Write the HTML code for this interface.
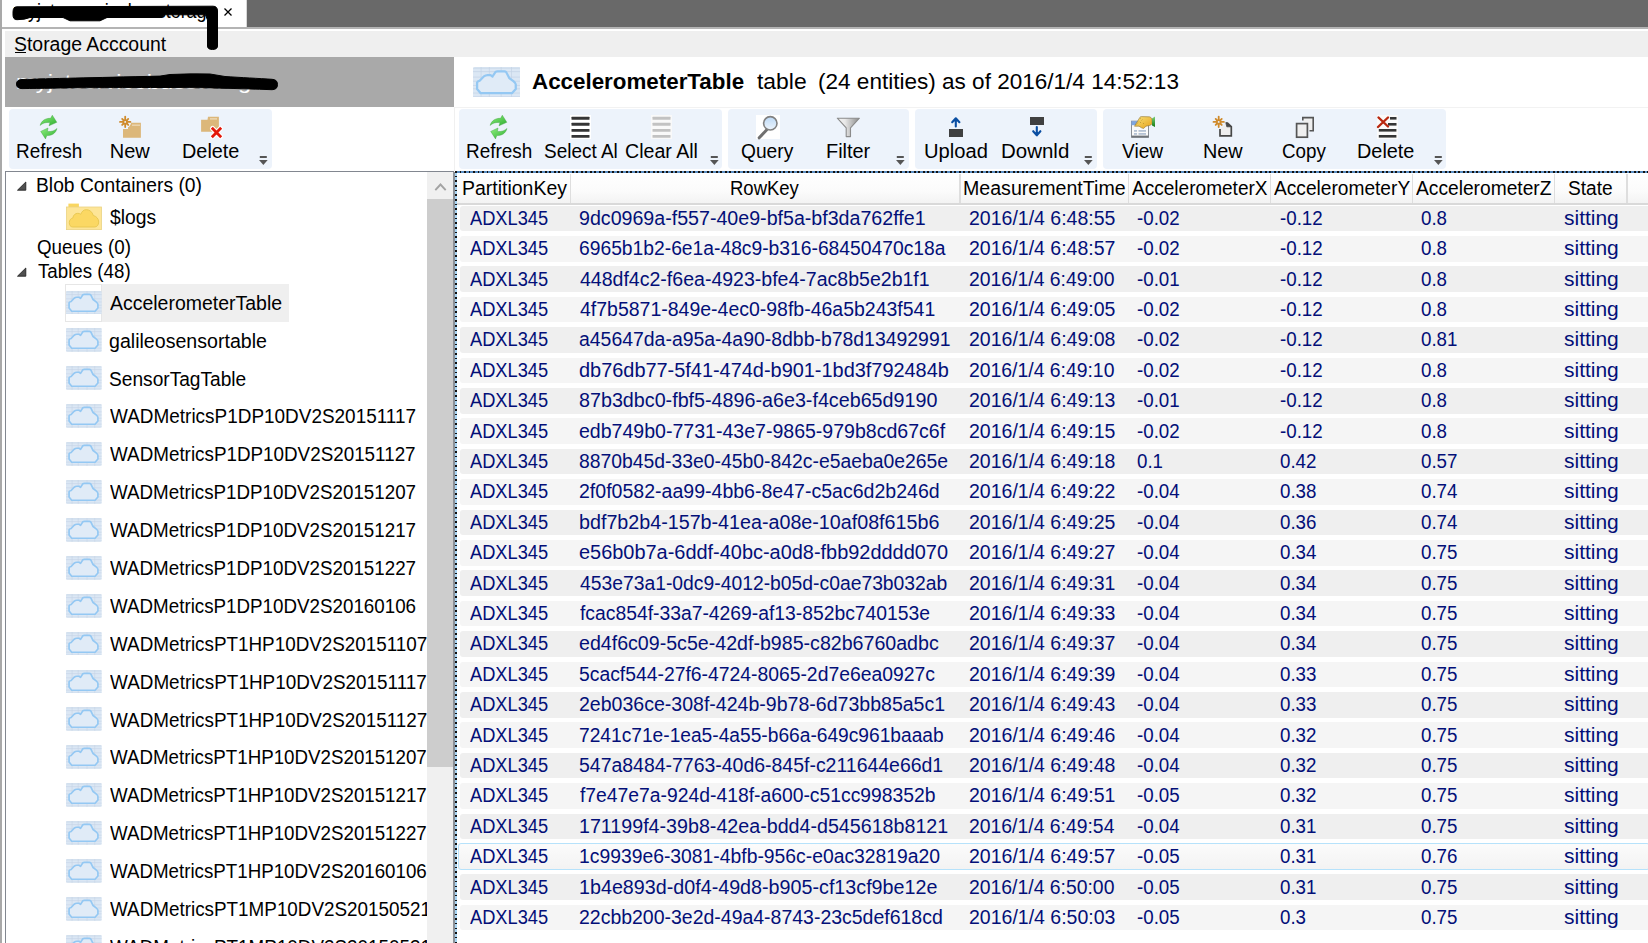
<!DOCTYPE html>
<html><head><meta charset="utf-8"><title>Storage Explorer</title>
<style>
html,body{margin:0;padding:0;width:1648px;height:943px;overflow:hidden;background:#fff;position:relative}
.t{position:absolute;white-space:pre;transform-origin:0 0;font-family:"Liberation Sans", sans-serif}
</style></head><body>
<div style="position:absolute;left:0px;top:0px;width:2px;height:943px;background:#a9a9a9"></div>
<div style="position:absolute;left:247px;top:0px;width:1401px;height:26.7px;background:#696969"></div>
<div style="position:absolute;left:245.5px;top:0px;width:1.5px;height:26.7px;background:#d8d8d8"></div>
<div style="position:absolute;left:2px;top:26.7px;width:1646px;height:2.0px;background:#b4b4b4"></div>
<div style="position:absolute;left:2px;top:28.7px;width:1646px;height:2.3000000000000007px;background:#ffffff"></div>
<div style="position:absolute;left:5px;top:31px;width:1643px;height:26px;background:#efefef"></div>
<div class="t" style="left:14.43px;top:33.97px;font-size:20px;line-height:20px;font-weight:normal;color:#000;transform:scaleX(0.9705)">Storage Acccount</div>
<div style="position:absolute;left:15px;top:52.3px;width:11px;height:1.2000000000000028px;background:#000"></div>
<div class="t" style="left:13.10px;top:1.37px;font-size:20px;line-height:20px;font-weight:normal;color:#000;transform:scaleX(0.8978)">myjstorservicebusstorage</div>
<svg style="position:absolute;left:0;top:0" width="260" height="60">
<path d="M13,12 Q13,6.8 17,6.8 L213,6.2 Q217.5,6.2 217.5,11 L217.5,46 Q217.5,49.5 212.5,49.5 Q207.5,49.5 207.5,46 L207.5,20 L205.4,14.8 L165,14.8 L161,17.5 L107,17.5 L100,20.8 L70,20.8 L63,17.5 L30,17.5 Q25,19.7 17,19.7 Q13,19.7 13,15 Z" fill="#000" stroke="#000" stroke-width="1" stroke-linejoin="round"/>
<path d="M224.5,8.5 L231.5,15.5 M231.5,8.5 L224.5,15.5" stroke="#000" stroke-width="1.3"/>
</svg>
<div style="position:absolute;left:5px;top:57px;width:448.8px;height:50px;background:#a9a9a9"></div>
<div class="t" style="left:15.81px;top:72.07px;font-size:20px;line-height:20px;font-weight:normal;color:#fff;transform:scaleX(1.1884)">myjstservicebusstorage</div>
<svg style="position:absolute;left:0;top:60" width="300" height="50">
<path d="M22,19.5 C50,18.5 90,17.8 160,16.1 L170,14.5 Q190,13.5 210,14 L225,16.5 C240,17.5 260,18.5 272,19.3 Q277.5,19.5 277.5,24.5 Q277.5,29.7 272,29.7 C240,28.5 200,27.5 160,27.5 C110,27.5 60,28 22,28.6 Q16.5,28.6 16.5,24 Q16.5,19.6 22,19.5 Z" fill="#000" stroke="#000" stroke-width="1" stroke-linejoin="round"/>
</svg>
<div style="position:absolute;left:455px;top:106.5px;width:1193px;height:1.0px;background:#f2f2f2"></div>
<div style="position:absolute;left:454px;top:107px;width:1px;height:64px;background:#f0f0f0"></div>
<svg style="position:absolute;left:472.6px;top:66.7px" width="47.8" height="30.8" viewBox="0 0 36 24" preserveAspectRatio="none">
<rect x="0" y="0" width="36" height="24" rx="1.5" fill="#dbe7f4"/>
<g stroke="#c4d3e6" stroke-width="0.55">
<path d="M6.1,0V24 M12.3,0V24 M21.2,0V24 M29,0V24 M0,0.9H36 M0,3.6H36 M0,7.9H36 M0,11.1H36 M0,14.4H36 M0,17H36 M0,20.3H36 M0,23.2H36"/>
</g>
<path d="M5.8,20.4 L3.1,17.2 L3.1,12 Q3.5,11 5.2,10.6 L8.2,7.3 Q9.5,6.3 11,6.3 L13.2,6.3 L14.7,7.4 L17,3.8 Q17.6,3.4 18.5,3.4 L23.5,3.4 Q24.5,3.4 25,4 L27.3,8.6 L30.4,11 Q32.2,12.5 32.2,13.5 L32.2,17.2 L29.3,20.4 Z" fill="#e0ebf7" stroke="#94c8f3" stroke-width="1.7" stroke-linejoin="round"/>
</svg>
<div class="t" style="left:531.98px;top:70.77px;font-size:22px;line-height:22px;font-weight:bold;color:#000;transform:scaleX(1.0164)">AccelerometerTable</div>
<div class="t" style="left:756.70px;top:70.77px;font-size:22px;line-height:22px;font-weight:normal;color:#000;transform:scaleX(1.0404)">table</div>
<div class="t" style="left:817.98px;top:70.77px;font-size:22px;line-height:22px;font-weight:normal;color:#000;transform:scaleX(1.0246)">(24 entities) as of 2016/1/4 14:52:13</div>
<div style="position:absolute;left:9.2px;top:109.2px;width:262.8px;height:60.10000000000001px;background:#edf3fb;border-radius:4px"></div>
<div style="position:absolute;left:459.2px;top:109.2px;width:262.8px;height:60.10000000000001px;background:#edf3fb;border-radius:4px"></div>
<div style="position:absolute;left:728.3px;top:109.2px;width:180.30000000000007px;height:60.10000000000001px;background:#edf3fb;border-radius:4px"></div>
<div style="position:absolute;left:915.2px;top:109.2px;width:181.5999999999999px;height:60.10000000000001px;background:#edf3fb;border-radius:4px"></div>
<div style="position:absolute;left:1103.3px;top:109.2px;width:342.29999999999995px;height:60.10000000000001px;background:#edf3fb;border-radius:4px"></div>
<svg style="position:absolute;left:259.3px;top:155px" width="10" height="11"><rect x="0.8" y="1" width="7" height="2" fill="#555"/><path d="M0,5 L8.7,5 L4.35,10 Z" fill="#555"/></svg>
<svg style="position:absolute;left:709.5px;top:155px" width="10" height="11"><rect x="0.8" y="1" width="7" height="2" fill="#555"/><path d="M0,5 L8.7,5 L4.35,10 Z" fill="#555"/></svg>
<svg style="position:absolute;left:896.3px;top:155px" width="10" height="11"><rect x="0.8" y="1" width="7" height="2" fill="#555"/><path d="M0,5 L8.7,5 L4.35,10 Z" fill="#555"/></svg>
<svg style="position:absolute;left:1084.4px;top:155px" width="10" height="11"><rect x="0.8" y="1" width="7" height="2" fill="#555"/><path d="M0,5 L8.7,5 L4.35,10 Z" fill="#555"/></svg>
<svg style="position:absolute;left:1433.6px;top:155px" width="10" height="11"><rect x="0.8" y="1" width="7" height="2" fill="#555"/><path d="M0,5 L8.7,5 L4.35,10 Z" fill="#555"/></svg>
<svg style="position:absolute;left:35px;top:112px" width="30" height="30" viewBox="0 0 30 30">
<defs><linearGradient id="gr35" x1="0" y1="0" x2="1" y2="1"><stop offset="0" stop-color="#8ef07e"/><stop offset="1" stop-color="#2fae2f"/></linearGradient></defs>
<path d="M5.1,13.4 C6.5,8.5 10.5,6.2 15.6,6.3 L17.3,3.2 L21.8,10.3 L14,13.8 L15,10.6 C10.5,10 7.5,11.3 5.1,13.4 Z" fill="url(#gr35)" stroke="#3ca03c" stroke-width="0.4"/>
<path d="M22,16.5 C20.6,21.5 16.8,23.6 11.8,23.6 L10.5,26.9 L5.7,19.4 L13,16 L12.4,19.4 C16.8,20 19.6,18.6 22,16.5 Z" fill="url(#gr35)" stroke="#3ca03c" stroke-width="0.4"/>
</svg>
<svg style="position:absolute;left:115px;top:112px" width="30" height="30">
<path d="M8,17 L13,17 L13,10.8 L25.9,10.8 L25.9,25.8 L8,25.8 Z" fill="#dcb77a"/>
<rect x="17" y="12.4" width="8" height="1.6" fill="#ead3ac"/>
<circle cx="10.2" cy="9.9" r="6" fill="#edf3fb"/>
<path d="M12.80,9.90 L15.40,9.90" stroke="#cf8a2b" stroke-width="1.8" stroke-linecap="round"/><path d="M12.04,11.74 L13.24,12.94" stroke="#cf8a2b" stroke-width="1.8" stroke-linecap="round"/><path d="M10.20,12.50 L10.20,15.10" stroke="#cf8a2b" stroke-width="1.8" stroke-linecap="round"/><path d="M8.36,11.74 L7.16,12.94" stroke="#cf8a2b" stroke-width="1.8" stroke-linecap="round"/><path d="M7.60,9.90 L5.00,9.90" stroke="#cf8a2b" stroke-width="1.8" stroke-linecap="round"/><path d="M8.36,8.06 L7.16,6.86" stroke="#cf8a2b" stroke-width="1.8" stroke-linecap="round"/><path d="M10.20,7.30 L10.20,4.70" stroke="#cf8a2b" stroke-width="1.8" stroke-linecap="round"/><path d="M12.04,8.06 L13.24,6.86" stroke="#cf8a2b" stroke-width="1.8" stroke-linecap="round"/><circle cx="10.2" cy="9.9" r="1.8" fill="none" stroke="#cf8a2b" stroke-width="1.7"/>
</svg>
<svg style="position:absolute;left:196px;top:112px" width="30" height="30">
<path d="M5.1,7.8 L11.5,7.8 L12,4.8 L22.9,4.8 L22.9,19.7 L5.1,19.7 Z" fill="#dcb77a"/>
<rect x="14" y="6" width="7" height="1.7" fill="#ead3ac"/>
<path d="M16.5,16.5 L24.5,24.5 M24.5,16.5 L16.5,24.5" stroke="#fff" stroke-width="5" stroke-linecap="round"/>
<path d="M16.8,16.8 L24.2,24.2 M24.2,16.8 L16.8,24.2" stroke="#e3180a" stroke-width="2.8" stroke-linecap="square"/>
</svg>
<div class="t" style="left:16.11px;top:140.87px;font-size:20px;line-height:20px;font-weight:normal;color:#000;transform:scaleX(0.9463)">Refresh</div>
<div class="t" style="left:109.80px;top:140.87px;font-size:20px;line-height:20px;font-weight:normal;color:#000;transform:scaleX(1.0000)">New</div>
<div class="t" style="left:182.41px;top:140.87px;font-size:20px;line-height:20px;font-weight:normal;color:#000;transform:scaleX(0.9927)">Delete</div>
<svg style="position:absolute;left:485px;top:112px" width="30" height="30" viewBox="0 0 30 30">
<defs><linearGradient id="gr485" x1="0" y1="0" x2="1" y2="1"><stop offset="0" stop-color="#8ef07e"/><stop offset="1" stop-color="#2fae2f"/></linearGradient></defs>
<path d="M5.1,13.4 C6.5,8.5 10.5,6.2 15.6,6.3 L17.3,3.2 L21.8,10.3 L14,13.8 L15,10.6 C10.5,10 7.5,11.3 5.1,13.4 Z" fill="url(#gr485)" stroke="#3ca03c" stroke-width="0.4"/>
<path d="M22,16.5 C20.6,21.5 16.8,23.6 11.8,23.6 L10.5,26.9 L5.7,19.4 L13,16 L12.4,19.4 C16.8,20 19.6,18.6 22,16.5 Z" fill="url(#gr485)" stroke="#3ca03c" stroke-width="0.4"/>
</svg>
<svg style="position:absolute;left:565px;top:112px" width="30" height="30"><rect x="5" y="3" width="21" height="24" fill="#ffffff"/><rect x="6.5" y="4.8" width="18" height="2.9" rx="0.5" fill="#353535"/><rect x="6.5" y="10.8" width="18" height="2.9" rx="0.5" fill="#353535"/><rect x="6.5" y="16.9" width="18" height="2.9" rx="0.5" fill="#353535"/><rect x="6.5" y="22.9" width="18" height="2.9" rx="0.5" fill="#353535"/></svg>
<svg style="position:absolute;left:646px;top:112px" width="30" height="30"><rect x="5" y="3" width="21" height="24" fill="#f9f9f9"/><rect x="6.5" y="4.8" width="18" height="2.9" rx="0.5" fill="#c2c2c2"/><rect x="6.5" y="10.8" width="18" height="2.9" rx="0.5" fill="#c2c2c2"/><rect x="6.5" y="16.9" width="18" height="2.9" rx="0.5" fill="#c2c2c2"/><rect x="6.5" y="22.9" width="18" height="2.9" rx="0.5" fill="#c2c2c2"/></svg>
<div class="t" style="left:466.11px;top:140.87px;font-size:20px;line-height:20px;font-weight:normal;color:#000;transform:scaleX(0.9463)">Refresh</div>
<div class="t" style="left:544.05px;top:140.87px;font-size:20px;line-height:20px;font-weight:normal;color:#000;transform:scaleX(0.9474)">Select Al</div>
<div class="t" style="left:625.02px;top:140.87px;font-size:20px;line-height:20px;font-weight:normal;color:#000;transform:scaleX(0.9792)">Clear All</div>
<svg style="position:absolute;left:752px;top:112px" width="30" height="30">
<rect x="4" y="3" width="24" height="24" fill="#fff"/>
<path d="M14.8,17.8 L7.2,25.8" stroke="#707070" stroke-width="3" stroke-linecap="round"/>
<defs><linearGradient id="lens" x1="0" y1="0" x2="0" y2="1"><stop offset="0" stop-color="#bcd9f6"/><stop offset="1" stop-color="#eef5fc"/></linearGradient></defs>
<circle cx="18.3" cy="11.3" r="6.7" fill="url(#lens)" stroke="#808080" stroke-width="1.6"/>
</svg>
<svg style="position:absolute;left:833px;top:112px" width="30" height="30">
<defs><linearGradient id="fun" x1="0" y1="0" x2="1" y2="0"><stop offset="0" stop-color="#f4f4f4"/><stop offset="0.35" stop-color="#e8e8e8"/><stop offset="1" stop-color="#8a8a8a"/></linearGradient></defs>
<path d="M4.3,6.2 L26.4,6.2 L17.5,15.8 L17.5,24.6 L13.2,24.6 L13.2,15.8 Z" fill="url(#fun)" stroke="#8b8b8b" stroke-width="1.1" stroke-linejoin="round"/>
</svg>
<div class="t" style="left:741.04px;top:140.87px;font-size:20px;line-height:20px;font-weight:normal;color:#000;transform:scaleX(0.9593)">Query</div>
<div class="t" style="left:826.01px;top:140.87px;font-size:20px;line-height:20px;font-weight:normal;color:#000;transform:scaleX(0.9952)">Filter</div>
<svg style="position:absolute;left:941px;top:112px" width="30" height="30">
<rect x="8" y="17" width="14" height="8" fill="#404040"/>
<path d="M14.8,14.5 L14.8,6.5 M11.2,10.2 L14.8,6.3 L18.4,10.2" fill="none" stroke="#0a4ea2" stroke-width="2.1" stroke-linecap="round" stroke-linejoin="round"/>
</svg>
<svg style="position:absolute;left:1022px;top:112px" width="30" height="30">
<rect x="8" y="5" width="14" height="8" fill="#404040"/>
<path d="M14.8,15 L14.8,23.3 M11.2,19.2 L14.8,23.4 L18.4,19.2" fill="none" stroke="#0a4ea2" stroke-width="2.1" stroke-linecap="round" stroke-linejoin="round"/>
</svg>
<div class="t" style="left:923.69px;top:140.87px;font-size:20px;line-height:20px;font-weight:normal;color:#000;transform:scaleX(1.0082)">Upload</div>
<div class="t" style="left:1001.45px;top:140.87px;font-size:20px;line-height:20px;font-weight:normal;color:#000;transform:scaleX(1.0234)">Downld</div>
<svg style="position:absolute;left:1128px;top:112px" width="30" height="30">
<rect x="3.5" y="9.2" width="17" height="16" fill="#fafafa" stroke="#8a8f96" stroke-width="1"/>
<rect x="3.5" y="9.2" width="9" height="4" fill="#7fa6e0"/>
<rect x="3.5" y="23.6" width="17.2" height="2" fill="#6f747a"/>
<rect x="6" y="18" width="3" height="1.8" fill="#b5c2d4"/><rect x="10.5" y="18" width="7.5" height="1.8" fill="#b5c2d4"/>
<rect x="6" y="21" width="3" height="1.8" fill="#b5c2d4"/><rect x="10.5" y="21" width="7.5" height="1.8" fill="#b5c2d4"/>
<defs><linearGradient id="hand" x1="0" y1="0" x2="1" y2="1"><stop offset="0" stop-color="#f8e27a"/><stop offset="1" stop-color="#e6a21a"/></linearGradient></defs>
<path d="M6.5,14.2 L12,5.2 Q12.5,4.6 13.5,4.6 L21.5,4.8 Q23,5 24,7 L24.2,11.5 Q23.5,13 21.5,13.5 L18,14.2 L15.5,16.5 L13.5,15.8 L11,14.2 Z" fill="url(#hand)" stroke="#8f7436" stroke-width="0.6" stroke-linejoin="round"/>
<path d="M8.5,12.5 L9.5,11.5 M10,10.5 L11,9.5 M12,11 L13,10 M13.5,8.5 L14.5,7.5 M15,12 L16,11 M12,7 L12.8,6.3" stroke="#8a6a1a" stroke-width="0.7" opacity="0.6"/>
<defs><linearGradient id="grn" x1="0" y1="0" x2="0" y2="1"><stop offset="0" stop-color="#7fd07a"/><stop offset="1" stop-color="#137a13"/></linearGradient></defs>
<path d="M24,6.5 L27,4.5 L27,15 L24,13.5 Z" fill="url(#grn)"/>
</svg>
<svg style="position:absolute;left:1209px;top:112px" width="30" height="30">
<path d="M11,17 L11,23.8 L22.3,23.8 L22.3,14.5 L18.5,11 L17,11" fill="#eeeeee" stroke="#474747" stroke-width="1.7" stroke-linejoin="miter"/>
<path d="M16.8,10.6 L22.6,14.8 L17.8,14.8 Z" fill="#474747" stroke="#474747" stroke-width="0.8" stroke-linejoin="round"/>
<path d="M12.30,9.90 L14.90,9.90" stroke="#cf8a2b" stroke-width="1.8" stroke-linecap="round"/><path d="M11.54,11.74 L12.74,12.94" stroke="#cf8a2b" stroke-width="1.8" stroke-linecap="round"/><path d="M9.70,12.50 L9.70,15.10" stroke="#cf8a2b" stroke-width="1.8" stroke-linecap="round"/><path d="M7.86,11.74 L6.66,12.94" stroke="#cf8a2b" stroke-width="1.8" stroke-linecap="round"/><path d="M7.10,9.90 L4.50,9.90" stroke="#cf8a2b" stroke-width="1.8" stroke-linecap="round"/><path d="M7.86,8.06 L6.66,6.86" stroke="#cf8a2b" stroke-width="1.8" stroke-linecap="round"/><path d="M9.70,7.30 L9.70,4.70" stroke="#cf8a2b" stroke-width="1.8" stroke-linecap="round"/><path d="M11.54,8.06 L12.74,6.86" stroke="#cf8a2b" stroke-width="1.8" stroke-linecap="round"/><circle cx="9.7" cy="9.9" r="1.8" fill="none" stroke="#cf8a2b" stroke-width="1.7"/>
</svg>
<svg style="position:absolute;left:1290px;top:112px" width="30" height="30">
<path d="M12.8,8.5 L12.8,5.6 L23.2,5.6 L23.2,18.8 L19.5,18.8" fill="#efefef" stroke="#555" stroke-width="1.6"/>
<rect x="6.6" y="11.6" width="10.8" height="13.6" fill="#efefef" stroke="#555" stroke-width="1.7"/>
</svg>
<svg style="position:absolute;left:1372px;top:112px" width="30" height="30">
<rect x="5" y="3" width="21" height="24" fill="#fafafa"/>
<rect x="18" y="5" width="6.5" height="2.6" fill="#353535"/>
<rect x="16" y="11" width="8.5" height="2.6" fill="#353535"/>
<rect x="6.8" y="17" width="17.6" height="2.6" fill="#353535"/>
<rect x="6.8" y="23" width="17.6" height="2.6" fill="#353535"/>
<path d="M6.5,5.5 L16,14.5 M16,5.5 L6,15" stroke="#b9280f" stroke-width="2.4" stroke-linecap="round"/>
</svg>
<div class="t" style="left:1122.30px;top:140.87px;font-size:20px;line-height:20px;font-weight:normal;color:#000;transform:scaleX(0.9558)">View</div>
<div class="t" style="left:1203.32px;top:140.87px;font-size:20px;line-height:20px;font-weight:normal;color:#000;transform:scaleX(0.9921)">New</div>
<div class="t" style="left:1282.36px;top:140.87px;font-size:20px;line-height:20px;font-weight:normal;color:#000;transform:scaleX(0.9391)">Copy</div>
<div class="t" style="left:1356.71px;top:140.87px;font-size:20px;line-height:20px;font-weight:normal;color:#000;transform:scaleX(0.9927)">Delete</div>
<div style="position:absolute;left:5px;top:171px;width:448.5px;height:1px;background:#828790"></div>
<div style="position:absolute;left:5px;top:171px;width:1px;height:772px;background:#828790"></div>
<div style="position:absolute;left:427px;top:172px;width:26px;height:27px;background:#f0f0f0"></div>
<svg style="position:absolute;left:427px;top:172px" width="26" height="27"><path d="M8.3,18.2 L13.5,12.5 L18.7,18.2" fill="none" stroke="#a3a3a3" stroke-width="1.9"/></svg>
<div style="position:absolute;left:427px;top:199px;width:26px;height:568px;background:#cdcdcd"></div>
<div style="position:absolute;left:427px;top:767px;width:26px;height:176px;background:#f0f0f0"></div>
<svg style="position:absolute;left:16px;top:181px" width="12" height="11"><path d="M1.5,9.2 L9.8,1 L9.8,9.2 Z" fill="#505050" stroke="#262626" stroke-width="0.9" stroke-linejoin="round"/></svg>
<svg style="position:absolute;left:16px;top:267px" width="12" height="11"><path d="M1.5,9.2 L9.8,1 L9.8,9.2 Z" fill="#505050" stroke="#262626" stroke-width="0.9" stroke-linejoin="round"/></svg>
<div class="t" style="left:36.27px;top:175.37px;font-size:20px;line-height:20px;font-weight:normal;color:#000;transform:scaleX(0.9633)">Blob Containers (0)</div>
<svg style="position:absolute;left:66px;top:203px" width="36" height="27" viewBox="0 0 36 27">
<rect x="2.4" y="0.6" width="10.5" height="4" fill="#f9d660"/>
<rect x="0.5" y="4" width="35" height="22.6" fill="#fde597" stroke="#ead382" stroke-width="0.8"/>
<path d="M6.8,24 C4.3,24 3.3,22 3.3,19.5 C3.3,17 4.8,15.5 6.8,15 C7.3,12 9.3,10.3 11.8,10.3 C13.1,10.3 14.1,10.7 14.8,11.3 C15.8,8.3 17.8,6.7 20.3,6.7 C23.8,6.7 26.3,9 27.3,12.5 C30.6,13.3 32.7,16 32.7,19 C32.7,22 31,24 28.5,24 Z" fill="#fbd863" stroke="#e7c650" stroke-width="0.9"/>
</svg>
<div class="t" style="left:110.10px;top:206.67px;font-size:20px;line-height:20px;font-weight:normal;color:#000;transform:scaleX(0.9681)">$logs</div>
<div class="t" style="left:37.26px;top:236.77px;font-size:20px;line-height:20px;font-weight:normal;color:#000;transform:scaleX(0.9388)">Queues (0)</div>
<div class="t" style="left:38.20px;top:260.97px;font-size:20px;line-height:20px;font-weight:normal;color:#000;transform:scaleX(0.9367)">Tables (48)</div>
<div style="position:absolute;left:65.1px;top:284px;width:37.2px;height:37.60000000000002px;background:#fff;box-sizing:border-box;border:1px solid #e6e6e6"></div>
<div style="position:absolute;left:102.3px;top:284px;width:186.7px;height:37.60000000000002px;background:#efefef"></div>
<div style="position:absolute;left:0;top:0;width:427px;height:943px;overflow:hidden">
<svg style="position:absolute;left:66.2px;top:290.6px" width="35.7" height="23.8" viewBox="0 0 36 24" preserveAspectRatio="none">
<rect x="0" y="0" width="36" height="24" rx="1.5" fill="#dbe7f4"/>
<g stroke="#c4d3e6" stroke-width="0.55">
<path d="M6.1,0V24 M12.3,0V24 M21.2,0V24 M29,0V24 M0,0.9H36 M0,3.6H36 M0,7.9H36 M0,11.1H36 M0,14.4H36 M0,17H36 M0,20.3H36 M0,23.2H36"/>
</g>
<path d="M5.8,20.4 L3.1,17.2 L3.1,12 Q3.5,11 5.2,10.6 L8.2,7.3 Q9.5,6.3 11,6.3 L13.2,6.3 L14.7,7.4 L17,3.8 Q17.6,3.4 18.5,3.4 L23.5,3.4 Q24.5,3.4 25,4 L27.3,8.6 L30.4,11 Q32.2,12.5 32.2,13.5 L32.2,17.2 L29.3,20.4 Z" fill="#e0ebf7" stroke="#94c8f3" stroke-width="1.7" stroke-linejoin="round"/>
</svg>
<div class="t" style="left:110.10px;top:292.77px;font-size:20px;line-height:20px;font-weight:normal;color:#000;transform:scaleX(0.9733)">AccelerometerTable</div>
<svg style="position:absolute;left:66.2px;top:328.49px" width="35.7" height="23.8" viewBox="0 0 36 24" preserveAspectRatio="none">
<rect x="0" y="0" width="36" height="24" rx="1.5" fill="#dbe7f4"/>
<g stroke="#c4d3e6" stroke-width="0.55">
<path d="M6.1,0V24 M12.3,0V24 M21.2,0V24 M29,0V24 M0,0.9H36 M0,3.6H36 M0,7.9H36 M0,11.1H36 M0,14.4H36 M0,17H36 M0,20.3H36 M0,23.2H36"/>
</g>
<path d="M5.8,20.4 L3.1,17.2 L3.1,12 Q3.5,11 5.2,10.6 L8.2,7.3 Q9.5,6.3 11,6.3 L13.2,6.3 L14.7,7.4 L17,3.8 Q17.6,3.4 18.5,3.4 L23.5,3.4 Q24.5,3.4 25,4 L27.3,8.6 L30.4,11 Q32.2,12.5 32.2,13.5 L32.2,17.2 L29.3,20.4 Z" fill="#e0ebf7" stroke="#94c8f3" stroke-width="1.7" stroke-linejoin="round"/>
</svg>
<div class="t" style="left:109.12px;top:330.66px;font-size:20px;line-height:20px;font-weight:normal;color:#000;transform:scaleX(0.9799)">galileosensortable</div>
<svg style="position:absolute;left:66.2px;top:366.38px" width="35.7" height="23.8" viewBox="0 0 36 24" preserveAspectRatio="none">
<rect x="0" y="0" width="36" height="24" rx="1.5" fill="#dbe7f4"/>
<g stroke="#c4d3e6" stroke-width="0.55">
<path d="M6.1,0V24 M12.3,0V24 M21.2,0V24 M29,0V24 M0,0.9H36 M0,3.6H36 M0,7.9H36 M0,11.1H36 M0,14.4H36 M0,17H36 M0,20.3H36 M0,23.2H36"/>
</g>
<path d="M5.8,20.4 L3.1,17.2 L3.1,12 Q3.5,11 5.2,10.6 L8.2,7.3 Q9.5,6.3 11,6.3 L13.2,6.3 L14.7,7.4 L17,3.8 Q17.6,3.4 18.5,3.4 L23.5,3.4 Q24.5,3.4 25,4 L27.3,8.6 L30.4,11 Q32.2,12.5 32.2,13.5 L32.2,17.2 L29.3,20.4 Z" fill="#e0ebf7" stroke="#94c8f3" stroke-width="1.7" stroke-linejoin="round"/>
</svg>
<div class="t" style="left:109.14px;top:368.55px;font-size:20px;line-height:20px;font-weight:normal;color:#000;transform:scaleX(0.9570)">SensorTagTable</div>
<svg style="position:absolute;left:66.2px;top:404.27000000000004px" width="35.7" height="23.8" viewBox="0 0 36 24" preserveAspectRatio="none">
<rect x="0" y="0" width="36" height="24" rx="1.5" fill="#dbe7f4"/>
<g stroke="#c4d3e6" stroke-width="0.55">
<path d="M6.1,0V24 M12.3,0V24 M21.2,0V24 M29,0V24 M0,0.9H36 M0,3.6H36 M0,7.9H36 M0,11.1H36 M0,14.4H36 M0,17H36 M0,20.3H36 M0,23.2H36"/>
</g>
<path d="M5.8,20.4 L3.1,17.2 L3.1,12 Q3.5,11 5.2,10.6 L8.2,7.3 Q9.5,6.3 11,6.3 L13.2,6.3 L14.7,7.4 L17,3.8 Q17.6,3.4 18.5,3.4 L23.5,3.4 Q24.5,3.4 25,4 L27.3,8.6 L30.4,11 Q32.2,12.5 32.2,13.5 L32.2,17.2 L29.3,20.4 Z" fill="#e0ebf7" stroke="#94c8f3" stroke-width="1.7" stroke-linejoin="round"/>
</svg>
<div class="t" style="left:110.10px;top:406.44px;font-size:20px;line-height:20px;font-weight:normal;color:#000;transform:scaleX(0.9472)">WADMetricsP1DP10DV2S20151117</div>
<svg style="position:absolute;left:66.2px;top:442.16px" width="35.7" height="23.8" viewBox="0 0 36 24" preserveAspectRatio="none">
<rect x="0" y="0" width="36" height="24" rx="1.5" fill="#dbe7f4"/>
<g stroke="#c4d3e6" stroke-width="0.55">
<path d="M6.1,0V24 M12.3,0V24 M21.2,0V24 M29,0V24 M0,0.9H36 M0,3.6H36 M0,7.9H36 M0,11.1H36 M0,14.4H36 M0,17H36 M0,20.3H36 M0,23.2H36"/>
</g>
<path d="M5.8,20.4 L3.1,17.2 L3.1,12 Q3.5,11 5.2,10.6 L8.2,7.3 Q9.5,6.3 11,6.3 L13.2,6.3 L14.7,7.4 L17,3.8 Q17.6,3.4 18.5,3.4 L23.5,3.4 Q24.5,3.4 25,4 L27.3,8.6 L30.4,11 Q32.2,12.5 32.2,13.5 L32.2,17.2 L29.3,20.4 Z" fill="#e0ebf7" stroke="#94c8f3" stroke-width="1.7" stroke-linejoin="round"/>
</svg>
<div class="t" style="left:110.10px;top:444.33px;font-size:20px;line-height:20px;font-weight:normal;color:#000;transform:scaleX(0.9414)">WADMetricsP1DP10DV2S20151127</div>
<svg style="position:absolute;left:66.2px;top:480.05px" width="35.7" height="23.8" viewBox="0 0 36 24" preserveAspectRatio="none">
<rect x="0" y="0" width="36" height="24" rx="1.5" fill="#dbe7f4"/>
<g stroke="#c4d3e6" stroke-width="0.55">
<path d="M6.1,0V24 M12.3,0V24 M21.2,0V24 M29,0V24 M0,0.9H36 M0,3.6H36 M0,7.9H36 M0,11.1H36 M0,14.4H36 M0,17H36 M0,20.3H36 M0,23.2H36"/>
</g>
<path d="M5.8,20.4 L3.1,17.2 L3.1,12 Q3.5,11 5.2,10.6 L8.2,7.3 Q9.5,6.3 11,6.3 L13.2,6.3 L14.7,7.4 L17,3.8 Q17.6,3.4 18.5,3.4 L23.5,3.4 Q24.5,3.4 25,4 L27.3,8.6 L30.4,11 Q32.2,12.5 32.2,13.5 L32.2,17.2 L29.3,20.4 Z" fill="#e0ebf7" stroke="#94c8f3" stroke-width="1.7" stroke-linejoin="round"/>
</svg>
<div class="t" style="left:110.10px;top:482.22px;font-size:20px;line-height:20px;font-weight:normal;color:#000;transform:scaleX(0.9385)">WADMetricsP1DP10DV2S20151207</div>
<svg style="position:absolute;left:66.2px;top:517.94px" width="35.7" height="23.8" viewBox="0 0 36 24" preserveAspectRatio="none">
<rect x="0" y="0" width="36" height="24" rx="1.5" fill="#dbe7f4"/>
<g stroke="#c4d3e6" stroke-width="0.55">
<path d="M6.1,0V24 M12.3,0V24 M21.2,0V24 M29,0V24 M0,0.9H36 M0,3.6H36 M0,7.9H36 M0,11.1H36 M0,14.4H36 M0,17H36 M0,20.3H36 M0,23.2H36"/>
</g>
<path d="M5.8,20.4 L3.1,17.2 L3.1,12 Q3.5,11 5.2,10.6 L8.2,7.3 Q9.5,6.3 11,6.3 L13.2,6.3 L14.7,7.4 L17,3.8 Q17.6,3.4 18.5,3.4 L23.5,3.4 Q24.5,3.4 25,4 L27.3,8.6 L30.4,11 Q32.2,12.5 32.2,13.5 L32.2,17.2 L29.3,20.4 Z" fill="#e0ebf7" stroke="#94c8f3" stroke-width="1.7" stroke-linejoin="round"/>
</svg>
<div class="t" style="left:110.10px;top:520.11px;font-size:20px;line-height:20px;font-weight:normal;color:#000;transform:scaleX(0.9385)">WADMetricsP1DP10DV2S20151217</div>
<svg style="position:absolute;left:66.2px;top:555.83px" width="35.7" height="23.8" viewBox="0 0 36 24" preserveAspectRatio="none">
<rect x="0" y="0" width="36" height="24" rx="1.5" fill="#dbe7f4"/>
<g stroke="#c4d3e6" stroke-width="0.55">
<path d="M6.1,0V24 M12.3,0V24 M21.2,0V24 M29,0V24 M0,0.9H36 M0,3.6H36 M0,7.9H36 M0,11.1H36 M0,14.4H36 M0,17H36 M0,20.3H36 M0,23.2H36"/>
</g>
<path d="M5.8,20.4 L3.1,17.2 L3.1,12 Q3.5,11 5.2,10.6 L8.2,7.3 Q9.5,6.3 11,6.3 L13.2,6.3 L14.7,7.4 L17,3.8 Q17.6,3.4 18.5,3.4 L23.5,3.4 Q24.5,3.4 25,4 L27.3,8.6 L30.4,11 Q32.2,12.5 32.2,13.5 L32.2,17.2 L29.3,20.4 Z" fill="#e0ebf7" stroke="#94c8f3" stroke-width="1.7" stroke-linejoin="round"/>
</svg>
<div class="t" style="left:110.10px;top:558.00px;font-size:20px;line-height:20px;font-weight:normal;color:#000;transform:scaleX(0.9385)">WADMetricsP1DP10DV2S20151227</div>
<svg style="position:absolute;left:66.2px;top:593.72px" width="35.7" height="23.8" viewBox="0 0 36 24" preserveAspectRatio="none">
<rect x="0" y="0" width="36" height="24" rx="1.5" fill="#dbe7f4"/>
<g stroke="#c4d3e6" stroke-width="0.55">
<path d="M6.1,0V24 M12.3,0V24 M21.2,0V24 M29,0V24 M0,0.9H36 M0,3.6H36 M0,7.9H36 M0,11.1H36 M0,14.4H36 M0,17H36 M0,20.3H36 M0,23.2H36"/>
</g>
<path d="M5.8,20.4 L3.1,17.2 L3.1,12 Q3.5,11 5.2,10.6 L8.2,7.3 Q9.5,6.3 11,6.3 L13.2,6.3 L14.7,7.4 L17,3.8 Q17.6,3.4 18.5,3.4 L23.5,3.4 Q24.5,3.4 25,4 L27.3,8.6 L30.4,11 Q32.2,12.5 32.2,13.5 L32.2,17.2 L29.3,20.4 Z" fill="#e0ebf7" stroke="#94c8f3" stroke-width="1.7" stroke-linejoin="round"/>
</svg>
<div class="t" style="left:110.10px;top:595.89px;font-size:20px;line-height:20px;font-weight:normal;color:#000;transform:scaleX(0.9385)">WADMetricsP1DP10DV2S20160106</div>
<svg style="position:absolute;left:66.2px;top:631.61px" width="35.7" height="23.8" viewBox="0 0 36 24" preserveAspectRatio="none">
<rect x="0" y="0" width="36" height="24" rx="1.5" fill="#dbe7f4"/>
<g stroke="#c4d3e6" stroke-width="0.55">
<path d="M6.1,0V24 M12.3,0V24 M21.2,0V24 M29,0V24 M0,0.9H36 M0,3.6H36 M0,7.9H36 M0,11.1H36 M0,14.4H36 M0,17H36 M0,20.3H36 M0,23.2H36"/>
</g>
<path d="M5.8,20.4 L3.1,17.2 L3.1,12 Q3.5,11 5.2,10.6 L8.2,7.3 Q9.5,6.3 11,6.3 L13.2,6.3 L14.7,7.4 L17,3.8 Q17.6,3.4 18.5,3.4 L23.5,3.4 Q24.5,3.4 25,4 L27.3,8.6 L30.4,11 Q32.2,12.5 32.2,13.5 L32.2,17.2 L29.3,20.4 Z" fill="#e0ebf7" stroke="#94c8f3" stroke-width="1.7" stroke-linejoin="round"/>
</svg>
<div class="t" style="left:110.10px;top:633.78px;font-size:20px;line-height:20px;font-weight:normal;color:#000;transform:scaleX(0.9420)">WADMetricsPT1HP10DV2S20151107</div>
<svg style="position:absolute;left:66.2px;top:669.5px" width="35.7" height="23.8" viewBox="0 0 36 24" preserveAspectRatio="none">
<rect x="0" y="0" width="36" height="24" rx="1.5" fill="#dbe7f4"/>
<g stroke="#c4d3e6" stroke-width="0.55">
<path d="M6.1,0V24 M12.3,0V24 M21.2,0V24 M29,0V24 M0,0.9H36 M0,3.6H36 M0,7.9H36 M0,11.1H36 M0,14.4H36 M0,17H36 M0,20.3H36 M0,23.2H36"/>
</g>
<path d="M5.8,20.4 L3.1,17.2 L3.1,12 Q3.5,11 5.2,10.6 L8.2,7.3 Q9.5,6.3 11,6.3 L13.2,6.3 L14.7,7.4 L17,3.8 Q17.6,3.4 18.5,3.4 L23.5,3.4 Q24.5,3.4 25,4 L27.3,8.6 L30.4,11 Q32.2,12.5 32.2,13.5 L32.2,17.2 L29.3,20.4 Z" fill="#e0ebf7" stroke="#94c8f3" stroke-width="1.7" stroke-linejoin="round"/>
</svg>
<div class="t" style="left:110.10px;top:671.67px;font-size:20px;line-height:20px;font-weight:normal;color:#000;transform:scaleX(0.9448)">WADMetricsPT1HP10DV2S20151117</div>
<svg style="position:absolute;left:66.2px;top:707.3900000000001px" width="35.7" height="23.8" viewBox="0 0 36 24" preserveAspectRatio="none">
<rect x="0" y="0" width="36" height="24" rx="1.5" fill="#dbe7f4"/>
<g stroke="#c4d3e6" stroke-width="0.55">
<path d="M6.1,0V24 M12.3,0V24 M21.2,0V24 M29,0V24 M0,0.9H36 M0,3.6H36 M0,7.9H36 M0,11.1H36 M0,14.4H36 M0,17H36 M0,20.3H36 M0,23.2H36"/>
</g>
<path d="M5.8,20.4 L3.1,17.2 L3.1,12 Q3.5,11 5.2,10.6 L8.2,7.3 Q9.5,6.3 11,6.3 L13.2,6.3 L14.7,7.4 L17,3.8 Q17.6,3.4 18.5,3.4 L23.5,3.4 Q24.5,3.4 25,4 L27.3,8.6 L30.4,11 Q32.2,12.5 32.2,13.5 L32.2,17.2 L29.3,20.4 Z" fill="#e0ebf7" stroke="#94c8f3" stroke-width="1.7" stroke-linejoin="round"/>
</svg>
<div class="t" style="left:110.10px;top:709.56px;font-size:20px;line-height:20px;font-weight:normal;color:#000;transform:scaleX(0.9420)">WADMetricsPT1HP10DV2S20151127</div>
<svg style="position:absolute;left:66.2px;top:745.28px" width="35.7" height="23.8" viewBox="0 0 36 24" preserveAspectRatio="none">
<rect x="0" y="0" width="36" height="24" rx="1.5" fill="#dbe7f4"/>
<g stroke="#c4d3e6" stroke-width="0.55">
<path d="M6.1,0V24 M12.3,0V24 M21.2,0V24 M29,0V24 M0,0.9H36 M0,3.6H36 M0,7.9H36 M0,11.1H36 M0,14.4H36 M0,17H36 M0,20.3H36 M0,23.2H36"/>
</g>
<path d="M5.8,20.4 L3.1,17.2 L3.1,12 Q3.5,11 5.2,10.6 L8.2,7.3 Q9.5,6.3 11,6.3 L13.2,6.3 L14.7,7.4 L17,3.8 Q17.6,3.4 18.5,3.4 L23.5,3.4 Q24.5,3.4 25,4 L27.3,8.6 L30.4,11 Q32.2,12.5 32.2,13.5 L32.2,17.2 L29.3,20.4 Z" fill="#e0ebf7" stroke="#94c8f3" stroke-width="1.7" stroke-linejoin="round"/>
</svg>
<div class="t" style="left:110.10px;top:747.45px;font-size:20px;line-height:20px;font-weight:normal;color:#000;transform:scaleX(0.9364)">WADMetricsPT1HP10DV2S20151207</div>
<svg style="position:absolute;left:66.2px;top:783.1700000000001px" width="35.7" height="23.8" viewBox="0 0 36 24" preserveAspectRatio="none">
<rect x="0" y="0" width="36" height="24" rx="1.5" fill="#dbe7f4"/>
<g stroke="#c4d3e6" stroke-width="0.55">
<path d="M6.1,0V24 M12.3,0V24 M21.2,0V24 M29,0V24 M0,0.9H36 M0,3.6H36 M0,7.9H36 M0,11.1H36 M0,14.4H36 M0,17H36 M0,20.3H36 M0,23.2H36"/>
</g>
<path d="M5.8,20.4 L3.1,17.2 L3.1,12 Q3.5,11 5.2,10.6 L8.2,7.3 Q9.5,6.3 11,6.3 L13.2,6.3 L14.7,7.4 L17,3.8 Q17.6,3.4 18.5,3.4 L23.5,3.4 Q24.5,3.4 25,4 L27.3,8.6 L30.4,11 Q32.2,12.5 32.2,13.5 L32.2,17.2 L29.3,20.4 Z" fill="#e0ebf7" stroke="#94c8f3" stroke-width="1.7" stroke-linejoin="round"/>
</svg>
<div class="t" style="left:110.10px;top:785.34px;font-size:20px;line-height:20px;font-weight:normal;color:#000;transform:scaleX(0.9364)">WADMetricsPT1HP10DV2S20151217</div>
<svg style="position:absolute;left:66.2px;top:821.0600000000001px" width="35.7" height="23.8" viewBox="0 0 36 24" preserveAspectRatio="none">
<rect x="0" y="0" width="36" height="24" rx="1.5" fill="#dbe7f4"/>
<g stroke="#c4d3e6" stroke-width="0.55">
<path d="M6.1,0V24 M12.3,0V24 M21.2,0V24 M29,0V24 M0,0.9H36 M0,3.6H36 M0,7.9H36 M0,11.1H36 M0,14.4H36 M0,17H36 M0,20.3H36 M0,23.2H36"/>
</g>
<path d="M5.8,20.4 L3.1,17.2 L3.1,12 Q3.5,11 5.2,10.6 L8.2,7.3 Q9.5,6.3 11,6.3 L13.2,6.3 L14.7,7.4 L17,3.8 Q17.6,3.4 18.5,3.4 L23.5,3.4 Q24.5,3.4 25,4 L27.3,8.6 L30.4,11 Q32.2,12.5 32.2,13.5 L32.2,17.2 L29.3,20.4 Z" fill="#e0ebf7" stroke="#94c8f3" stroke-width="1.7" stroke-linejoin="round"/>
</svg>
<div class="t" style="left:110.10px;top:823.23px;font-size:20px;line-height:20px;font-weight:normal;color:#000;transform:scaleX(0.9364)">WADMetricsPT1HP10DV2S20151227</div>
<svg style="position:absolute;left:66.2px;top:858.95px" width="35.7" height="23.8" viewBox="0 0 36 24" preserveAspectRatio="none">
<rect x="0" y="0" width="36" height="24" rx="1.5" fill="#dbe7f4"/>
<g stroke="#c4d3e6" stroke-width="0.55">
<path d="M6.1,0V24 M12.3,0V24 M21.2,0V24 M29,0V24 M0,0.9H36 M0,3.6H36 M0,7.9H36 M0,11.1H36 M0,14.4H36 M0,17H36 M0,20.3H36 M0,23.2H36"/>
</g>
<path d="M5.8,20.4 L3.1,17.2 L3.1,12 Q3.5,11 5.2,10.6 L8.2,7.3 Q9.5,6.3 11,6.3 L13.2,6.3 L14.7,7.4 L17,3.8 Q17.6,3.4 18.5,3.4 L23.5,3.4 Q24.5,3.4 25,4 L27.3,8.6 L30.4,11 Q32.2,12.5 32.2,13.5 L32.2,17.2 L29.3,20.4 Z" fill="#e0ebf7" stroke="#94c8f3" stroke-width="1.7" stroke-linejoin="round"/>
</svg>
<div class="t" style="left:110.10px;top:861.12px;font-size:20px;line-height:20px;font-weight:normal;color:#000;transform:scaleX(0.9364)">WADMetricsPT1HP10DV2S20160106</div>
<svg style="position:absolute;left:66.2px;top:896.84px" width="35.7" height="23.8" viewBox="0 0 36 24" preserveAspectRatio="none">
<rect x="0" y="0" width="36" height="24" rx="1.5" fill="#dbe7f4"/>
<g stroke="#c4d3e6" stroke-width="0.55">
<path d="M6.1,0V24 M12.3,0V24 M21.2,0V24 M29,0V24 M0,0.9H36 M0,3.6H36 M0,7.9H36 M0,11.1H36 M0,14.4H36 M0,17H36 M0,20.3H36 M0,23.2H36"/>
</g>
<path d="M5.8,20.4 L3.1,17.2 L3.1,12 Q3.5,11 5.2,10.6 L8.2,7.3 Q9.5,6.3 11,6.3 L13.2,6.3 L14.7,7.4 L17,3.8 Q17.6,3.4 18.5,3.4 L23.5,3.4 Q24.5,3.4 25,4 L27.3,8.6 L30.4,11 Q32.2,12.5 32.2,13.5 L32.2,17.2 L29.3,20.4 Z" fill="#e0ebf7" stroke="#94c8f3" stroke-width="1.7" stroke-linejoin="round"/>
</svg>
<div class="t" style="left:110.10px;top:899.01px;font-size:20px;line-height:20px;font-weight:normal;color:#000;transform:scaleX(0.9426)">WADMetricsPT1MP10DV2S20150521</div>
<svg style="position:absolute;left:66.2px;top:934.73px" width="35.7" height="23.8" viewBox="0 0 36 24" preserveAspectRatio="none">
<rect x="0" y="0" width="36" height="24" rx="1.5" fill="#dbe7f4"/>
<g stroke="#c4d3e6" stroke-width="0.55">
<path d="M6.1,0V24 M12.3,0V24 M21.2,0V24 M29,0V24 M0,0.9H36 M0,3.6H36 M0,7.9H36 M0,11.1H36 M0,14.4H36 M0,17H36 M0,20.3H36 M0,23.2H36"/>
</g>
<path d="M5.8,20.4 L3.1,17.2 L3.1,12 Q3.5,11 5.2,10.6 L8.2,7.3 Q9.5,6.3 11,6.3 L13.2,6.3 L14.7,7.4 L17,3.8 Q17.6,3.4 18.5,3.4 L23.5,3.4 Q24.5,3.4 25,4 L27.3,8.6 L30.4,11 Q32.2,12.5 32.2,13.5 L32.2,17.2 L29.3,20.4 Z" fill="#e0ebf7" stroke="#94c8f3" stroke-width="1.7" stroke-linejoin="round"/>
</svg>
<div class="t" style="left:110.10px;top:936.90px;font-size:20px;line-height:20px;font-weight:normal;color:#000;transform:scaleX(0.9426)">WADMetricsPT1MP10DV2S20150531</div>
</div>
<div style="position:absolute;left:453px;top:172px;width:1.5px;height:771px;background:#8c9198"></div>
<div style="position:absolute;left:455px;top:171px;width:1193px;height:1.5999999999999943px;background:repeating-linear-gradient(90deg,#111 0,#111 1.6px,#5b8fc4 1.6px,#5b8fc4 4.5px)"></div>
<div style="position:absolute;left:455px;top:171px;width:1.6999999999999886px;height:772px;background:repeating-linear-gradient(180deg,#111 0,#111 1.6px,#a9d6f5 1.6px,#a9d6f5 4.67px)"></div>
<div style="position:absolute;left:457px;top:174.3px;width:1191px;height:28.69999999999999px;background:linear-gradient(#ffffff,#fbfbfb 60%,#f3f3f3)"></div>
<div style="position:absolute;left:457px;top:203px;width:1191px;height:1.5px;background:#d9d9d9"></div>
<div style="position:absolute;left:569.75px;top:174.3px;width:1.5px;height:28.69999999999999px;background:#dedede"></div>
<div style="position:absolute;left:959.25px;top:174.3px;width:1.5px;height:28.69999999999999px;background:#dedede"></div>
<div style="position:absolute;left:1127.55px;top:174.3px;width:1.5px;height:28.69999999999999px;background:#dedede"></div>
<div style="position:absolute;left:1269.55px;top:174.3px;width:1.5px;height:28.69999999999999px;background:#dedede"></div>
<div style="position:absolute;left:1411.85px;top:174.3px;width:1.5px;height:28.69999999999999px;background:#dedede"></div>
<div style="position:absolute;left:1553.85px;top:174.3px;width:1.5px;height:28.69999999999999px;background:#dedede"></div>
<div style="position:absolute;left:1626.25px;top:174.3px;width:1.5px;height:28.69999999999999px;background:#dedede"></div>
<div class="t" style="left:462.35px;top:178.27px;font-size:20px;line-height:20px;font-weight:normal;color:#000;transform:scaleX(0.9736)">PartitionKey</div>
<div class="t" style="left:730.15px;top:178.27px;font-size:20px;line-height:20px;font-weight:normal;color:#000;transform:scaleX(0.9247)">RowKey</div>
<div class="t" style="left:962.64px;top:178.27px;font-size:20px;line-height:20px;font-weight:normal;color:#000;transform:scaleX(0.9798)">MeasurementTime</div>
<div class="t" style="left:1131.70px;top:178.27px;font-size:20px;line-height:20px;font-weight:normal;color:#000;transform:scaleX(0.9528)">AccelerometerX</div>
<div class="t" style="left:1273.80px;top:178.27px;font-size:20px;line-height:20px;font-weight:normal;color:#000;transform:scaleX(0.9570)">AccelerometerY</div>
<div class="t" style="left:1416.00px;top:178.27px;font-size:20px;line-height:20px;font-weight:normal;color:#000;transform:scaleX(0.9596)">AccelerometerZ</div>
<div class="t" style="left:1568.04px;top:178.27px;font-size:20px;line-height:20px;font-weight:normal;color:#000;transform:scaleX(0.9556)">State</div>
<div style="position:absolute;left:459.8px;top:205.6px;width:1190.2px;height:25.599999999999994px;background:#efefef;border-radius:3px"></div>
<div class="t" style="left:469.60px;top:207.87px;font-size:20px;line-height:20px;font-weight:normal;color:#030f78;transform:scaleX(0.9129)">ADXL345</div>
<div class="t" style="left:579.22px;top:207.87px;font-size:20px;line-height:20px;font-weight:normal;color:#030f78;transform:scaleX(0.9810)">9dc0969a-f557-40e9-bf5a-bf3da762ffe1</div>
<div class="t" style="left:968.73px;top:207.87px;font-size:20px;line-height:20px;font-weight:normal;color:#030f78;transform:scaleX(0.9750)">2016/1/4 6:48:55</div>
<div class="t" style="left:1137.06px;top:207.87px;font-size:20px;line-height:20px;font-weight:normal;color:#030f78;transform:scaleX(0.9367)">-0.02</div>
<div class="t" style="left:1279.56px;top:207.87px;font-size:20px;line-height:20px;font-weight:normal;color:#030f78;transform:scaleX(0.9367)">-0.12</div>
<div class="t" style="left:1421.36px;top:207.87px;font-size:20px;line-height:20px;font-weight:normal;color:#030f78;transform:scaleX(0.9367)">0.8</div>
<div class="t" style="left:1563.55px;top:207.87px;font-size:20px;line-height:20px;font-weight:normal;color:#030f78;transform:scaleX(1.0480)">sitting</div>
<div style="position:absolute;left:459.8px;top:236.0px;width:1190.2px;height:25.600000000000023px;background:#f5f5f5;border-radius:3px"></div>
<div class="t" style="left:469.60px;top:238.27px;font-size:20px;line-height:20px;font-weight:normal;color:#030f78;transform:scaleX(0.9129)">ADXL345</div>
<div class="t" style="left:579.24px;top:238.27px;font-size:20px;line-height:20px;font-weight:normal;color:#030f78;transform:scaleX(0.9634)">6965b1b2-6e1a-48c9-b316-68450470c18a</div>
<div class="t" style="left:968.73px;top:238.27px;font-size:20px;line-height:20px;font-weight:normal;color:#030f78;transform:scaleX(0.9750)">2016/1/4 6:48:57</div>
<div class="t" style="left:1137.06px;top:238.27px;font-size:20px;line-height:20px;font-weight:normal;color:#030f78;transform:scaleX(0.9367)">-0.02</div>
<div class="t" style="left:1279.56px;top:238.27px;font-size:20px;line-height:20px;font-weight:normal;color:#030f78;transform:scaleX(0.9367)">-0.12</div>
<div class="t" style="left:1421.36px;top:238.27px;font-size:20px;line-height:20px;font-weight:normal;color:#030f78;transform:scaleX(0.9367)">0.8</div>
<div class="t" style="left:1563.55px;top:238.27px;font-size:20px;line-height:20px;font-weight:normal;color:#030f78;transform:scaleX(1.0480)">sitting</div>
<div style="position:absolute;left:459.8px;top:266.4px;width:1190.2px;height:25.600000000000023px;background:#efefef;border-radius:3px"></div>
<div class="t" style="left:469.60px;top:268.67px;font-size:20px;line-height:20px;font-weight:normal;color:#030f78;transform:scaleX(0.9129)">ADXL345</div>
<div class="t" style="left:580.20px;top:268.67px;font-size:20px;line-height:20px;font-weight:normal;color:#030f78;transform:scaleX(0.9765)">448df4c2-f6ea-4923-bfe4-7ac8b5e2b1f1</div>
<div class="t" style="left:968.73px;top:268.67px;font-size:20px;line-height:20px;font-weight:normal;color:#030f78;transform:scaleX(0.9685)">2016/1/4 6:49:00</div>
<div class="t" style="left:1137.06px;top:268.67px;font-size:20px;line-height:20px;font-weight:normal;color:#030f78;transform:scaleX(0.9367)">-0.01</div>
<div class="t" style="left:1279.56px;top:268.67px;font-size:20px;line-height:20px;font-weight:normal;color:#030f78;transform:scaleX(0.9367)">-0.12</div>
<div class="t" style="left:1421.36px;top:268.67px;font-size:20px;line-height:20px;font-weight:normal;color:#030f78;transform:scaleX(0.9367)">0.8</div>
<div class="t" style="left:1563.55px;top:268.67px;font-size:20px;line-height:20px;font-weight:normal;color:#030f78;transform:scaleX(1.0480)">sitting</div>
<div style="position:absolute;left:459.8px;top:296.79999999999995px;width:1190.2px;height:25.600000000000023px;background:#f5f5f5;border-radius:3px"></div>
<div class="t" style="left:469.60px;top:299.07px;font-size:20px;line-height:20px;font-weight:normal;color:#030f78;transform:scaleX(0.9129)">ADXL345</div>
<div class="t" style="left:580.20px;top:299.07px;font-size:20px;line-height:20px;font-weight:normal;color:#030f78;transform:scaleX(0.9739)">4f7b5871-849e-4ec0-98fb-46a5b243f541</div>
<div class="t" style="left:968.73px;top:299.07px;font-size:20px;line-height:20px;font-weight:normal;color:#030f78;transform:scaleX(0.9750)">2016/1/4 6:49:05</div>
<div class="t" style="left:1137.06px;top:299.07px;font-size:20px;line-height:20px;font-weight:normal;color:#030f78;transform:scaleX(0.9367)">-0.02</div>
<div class="t" style="left:1279.56px;top:299.07px;font-size:20px;line-height:20px;font-weight:normal;color:#030f78;transform:scaleX(0.9367)">-0.12</div>
<div class="t" style="left:1421.36px;top:299.07px;font-size:20px;line-height:20px;font-weight:normal;color:#030f78;transform:scaleX(0.9367)">0.8</div>
<div class="t" style="left:1563.55px;top:299.07px;font-size:20px;line-height:20px;font-weight:normal;color:#030f78;transform:scaleX(1.0480)">sitting</div>
<div style="position:absolute;left:459.8px;top:327.2px;width:1190.2px;height:25.600000000000023px;background:#efefef;border-radius:3px"></div>
<div class="t" style="left:469.60px;top:329.47px;font-size:20px;line-height:20px;font-weight:normal;color:#030f78;transform:scaleX(0.9129)">ADXL345</div>
<div class="t" style="left:579.23px;top:329.47px;font-size:20px;line-height:20px;font-weight:normal;color:#030f78;transform:scaleX(0.9711)">a45647da-a95a-4a90-8dbb-b78d13492991</div>
<div class="t" style="left:968.73px;top:329.47px;font-size:20px;line-height:20px;font-weight:normal;color:#030f78;transform:scaleX(0.9750)">2016/1/4 6:49:08</div>
<div class="t" style="left:1137.06px;top:329.47px;font-size:20px;line-height:20px;font-weight:normal;color:#030f78;transform:scaleX(0.9367)">-0.02</div>
<div class="t" style="left:1279.56px;top:329.47px;font-size:20px;line-height:20px;font-weight:normal;color:#030f78;transform:scaleX(0.9367)">-0.12</div>
<div class="t" style="left:1421.36px;top:329.47px;font-size:20px;line-height:20px;font-weight:normal;color:#030f78;transform:scaleX(0.9367)">0.81</div>
<div class="t" style="left:1563.55px;top:329.47px;font-size:20px;line-height:20px;font-weight:normal;color:#030f78;transform:scaleX(1.0480)">sitting</div>
<div style="position:absolute;left:459.8px;top:357.6px;width:1190.2px;height:25.600000000000023px;background:#f5f5f5;border-radius:3px"></div>
<div class="t" style="left:469.60px;top:359.87px;font-size:20px;line-height:20px;font-weight:normal;color:#030f78;transform:scaleX(0.9129)">ADXL345</div>
<div class="t" style="left:579.20px;top:359.87px;font-size:20px;line-height:20px;font-weight:normal;color:#030f78;transform:scaleX(0.9957)">db76db77-5f41-474d-b901-1bd3f792484b</div>
<div class="t" style="left:968.73px;top:359.87px;font-size:20px;line-height:20px;font-weight:normal;color:#030f78;transform:scaleX(0.9685)">2016/1/4 6:49:10</div>
<div class="t" style="left:1137.06px;top:359.87px;font-size:20px;line-height:20px;font-weight:normal;color:#030f78;transform:scaleX(0.9367)">-0.02</div>
<div class="t" style="left:1279.56px;top:359.87px;font-size:20px;line-height:20px;font-weight:normal;color:#030f78;transform:scaleX(0.9367)">-0.12</div>
<div class="t" style="left:1421.36px;top:359.87px;font-size:20px;line-height:20px;font-weight:normal;color:#030f78;transform:scaleX(0.9367)">0.8</div>
<div class="t" style="left:1563.55px;top:359.87px;font-size:20px;line-height:20px;font-weight:normal;color:#030f78;transform:scaleX(1.0480)">sitting</div>
<div style="position:absolute;left:459.8px;top:388.0px;width:1190.2px;height:25.600000000000023px;background:#efefef;border-radius:3px"></div>
<div class="t" style="left:469.60px;top:390.27px;font-size:20px;line-height:20px;font-weight:normal;color:#030f78;transform:scaleX(0.9129)">ADXL345</div>
<div class="t" style="left:579.21px;top:390.27px;font-size:20px;line-height:20px;font-weight:normal;color:#030f78;transform:scaleX(0.9856)">87b3dbc0-fbf5-4896-a6e3-f4ceb65d9190</div>
<div class="t" style="left:968.73px;top:390.27px;font-size:20px;line-height:20px;font-weight:normal;color:#030f78;transform:scaleX(0.9750)">2016/1/4 6:49:13</div>
<div class="t" style="left:1137.06px;top:390.27px;font-size:20px;line-height:20px;font-weight:normal;color:#030f78;transform:scaleX(0.9367)">-0.01</div>
<div class="t" style="left:1279.56px;top:390.27px;font-size:20px;line-height:20px;font-weight:normal;color:#030f78;transform:scaleX(0.9367)">-0.12</div>
<div class="t" style="left:1421.36px;top:390.27px;font-size:20px;line-height:20px;font-weight:normal;color:#030f78;transform:scaleX(0.9367)">0.8</div>
<div class="t" style="left:1563.55px;top:390.27px;font-size:20px;line-height:20px;font-weight:normal;color:#030f78;transform:scaleX(1.0480)">sitting</div>
<div style="position:absolute;left:459.8px;top:418.4px;width:1190.2px;height:25.600000000000023px;background:#f5f5f5;border-radius:3px"></div>
<div class="t" style="left:469.60px;top:420.67px;font-size:20px;line-height:20px;font-weight:normal;color:#030f78;transform:scaleX(0.9129)">ADXL345</div>
<div class="t" style="left:579.22px;top:420.67px;font-size:20px;line-height:20px;font-weight:normal;color:#030f78;transform:scaleX(0.9770)">edb749b0-7731-43e7-9865-979b8cd67c6f</div>
<div class="t" style="left:968.73px;top:420.67px;font-size:20px;line-height:20px;font-weight:normal;color:#030f78;transform:scaleX(0.9750)">2016/1/4 6:49:15</div>
<div class="t" style="left:1137.06px;top:420.67px;font-size:20px;line-height:20px;font-weight:normal;color:#030f78;transform:scaleX(0.9367)">-0.02</div>
<div class="t" style="left:1279.56px;top:420.67px;font-size:20px;line-height:20px;font-weight:normal;color:#030f78;transform:scaleX(0.9367)">-0.12</div>
<div class="t" style="left:1421.36px;top:420.67px;font-size:20px;line-height:20px;font-weight:normal;color:#030f78;transform:scaleX(0.9367)">0.8</div>
<div class="t" style="left:1563.55px;top:420.67px;font-size:20px;line-height:20px;font-weight:normal;color:#030f78;transform:scaleX(1.0480)">sitting</div>
<div style="position:absolute;left:459.8px;top:448.79999999999995px;width:1190.2px;height:25.600000000000023px;background:#efefef;border-radius:3px"></div>
<div class="t" style="left:469.60px;top:451.07px;font-size:20px;line-height:20px;font-weight:normal;color:#030f78;transform:scaleX(0.9129)">ADXL345</div>
<div class="t" style="left:579.23px;top:451.07px;font-size:20px;line-height:20px;font-weight:normal;color:#030f78;transform:scaleX(0.9676)">8870b45d-33e0-45b0-842c-e5aeba0e265e</div>
<div class="t" style="left:968.73px;top:451.07px;font-size:20px;line-height:20px;font-weight:normal;color:#030f78;transform:scaleX(0.9750)">2016/1/4 6:49:18</div>
<div class="t" style="left:1137.06px;top:451.07px;font-size:20px;line-height:20px;font-weight:normal;color:#030f78;transform:scaleX(0.9367)">0.1</div>
<div class="t" style="left:1279.56px;top:451.07px;font-size:20px;line-height:20px;font-weight:normal;color:#030f78;transform:scaleX(0.9367)">0.42</div>
<div class="t" style="left:1421.36px;top:451.07px;font-size:20px;line-height:20px;font-weight:normal;color:#030f78;transform:scaleX(0.9367)">0.57</div>
<div class="t" style="left:1563.55px;top:451.07px;font-size:20px;line-height:20px;font-weight:normal;color:#030f78;transform:scaleX(1.0480)">sitting</div>
<div style="position:absolute;left:459.8px;top:479.19999999999993px;width:1190.2px;height:25.600000000000023px;background:#f5f5f5;border-radius:3px"></div>
<div class="t" style="left:469.60px;top:481.47px;font-size:20px;line-height:20px;font-weight:normal;color:#030f78;transform:scaleX(0.9129)">ADXL345</div>
<div class="t" style="left:579.22px;top:481.47px;font-size:20px;line-height:20px;font-weight:normal;color:#030f78;transform:scaleX(0.9768)">2f0f0582-aa99-4bb6-8e47-c5ac6d2b246d</div>
<div class="t" style="left:968.73px;top:481.47px;font-size:20px;line-height:20px;font-weight:normal;color:#030f78;transform:scaleX(0.9750)">2016/1/4 6:49:22</div>
<div class="t" style="left:1137.06px;top:481.47px;font-size:20px;line-height:20px;font-weight:normal;color:#030f78;transform:scaleX(0.9367)">-0.04</div>
<div class="t" style="left:1279.56px;top:481.47px;font-size:20px;line-height:20px;font-weight:normal;color:#030f78;transform:scaleX(0.9367)">0.38</div>
<div class="t" style="left:1421.36px;top:481.47px;font-size:20px;line-height:20px;font-weight:normal;color:#030f78;transform:scaleX(0.9367)">0.74</div>
<div class="t" style="left:1563.55px;top:481.47px;font-size:20px;line-height:20px;font-weight:normal;color:#030f78;transform:scaleX(1.0480)">sitting</div>
<div style="position:absolute;left:459.8px;top:509.6px;width:1190.2px;height:25.600000000000023px;background:#efefef;border-radius:3px"></div>
<div class="t" style="left:469.60px;top:511.87px;font-size:20px;line-height:20px;font-weight:normal;color:#030f78;transform:scaleX(0.9129)">ADXL345</div>
<div class="t" style="left:579.22px;top:511.87px;font-size:20px;line-height:20px;font-weight:normal;color:#030f78;transform:scaleX(0.9849)">bdf7b2b4-157b-41ea-a08e-10af08f615b6</div>
<div class="t" style="left:968.73px;top:511.87px;font-size:20px;line-height:20px;font-weight:normal;color:#030f78;transform:scaleX(0.9750)">2016/1/4 6:49:25</div>
<div class="t" style="left:1137.06px;top:511.87px;font-size:20px;line-height:20px;font-weight:normal;color:#030f78;transform:scaleX(0.9367)">-0.04</div>
<div class="t" style="left:1279.56px;top:511.87px;font-size:20px;line-height:20px;font-weight:normal;color:#030f78;transform:scaleX(0.9367)">0.36</div>
<div class="t" style="left:1421.36px;top:511.87px;font-size:20px;line-height:20px;font-weight:normal;color:#030f78;transform:scaleX(0.9367)">0.74</div>
<div class="t" style="left:1563.55px;top:511.87px;font-size:20px;line-height:20px;font-weight:normal;color:#030f78;transform:scaleX(1.0480)">sitting</div>
<div style="position:absolute;left:459.8px;top:540.0px;width:1190.2px;height:25.600000000000023px;background:#f5f5f5;border-radius:3px"></div>
<div class="t" style="left:469.60px;top:542.27px;font-size:20px;line-height:20px;font-weight:normal;color:#030f78;transform:scaleX(0.9129)">ADXL345</div>
<div class="t" style="left:579.20px;top:542.27px;font-size:20px;line-height:20px;font-weight:normal;color:#030f78;transform:scaleX(0.9965)">e56b0b7a-6ddf-40bc-a0d8-fbb92dddd070</div>
<div class="t" style="left:968.73px;top:542.27px;font-size:20px;line-height:20px;font-weight:normal;color:#030f78;transform:scaleX(0.9750)">2016/1/4 6:49:27</div>
<div class="t" style="left:1137.06px;top:542.27px;font-size:20px;line-height:20px;font-weight:normal;color:#030f78;transform:scaleX(0.9367)">-0.04</div>
<div class="t" style="left:1279.56px;top:542.27px;font-size:20px;line-height:20px;font-weight:normal;color:#030f78;transform:scaleX(0.9367)">0.34</div>
<div class="t" style="left:1421.36px;top:542.27px;font-size:20px;line-height:20px;font-weight:normal;color:#030f78;transform:scaleX(0.9367)">0.75</div>
<div class="t" style="left:1563.55px;top:542.27px;font-size:20px;line-height:20px;font-weight:normal;color:#030f78;transform:scaleX(1.0480)">sitting</div>
<div style="position:absolute;left:459.8px;top:570.4px;width:1190.2px;height:25.600000000000023px;background:#efefef;border-radius:3px"></div>
<div class="t" style="left:469.60px;top:572.67px;font-size:20px;line-height:20px;font-weight:normal;color:#030f78;transform:scaleX(0.9129)">ADXL345</div>
<div class="t" style="left:580.20px;top:572.67px;font-size:20px;line-height:20px;font-weight:normal;color:#030f78;transform:scaleX(0.9658)">453e73a1-0dc9-4012-b05d-c0ae73b032ab</div>
<div class="t" style="left:968.73px;top:572.67px;font-size:20px;line-height:20px;font-weight:normal;color:#030f78;transform:scaleX(0.9750)">2016/1/4 6:49:31</div>
<div class="t" style="left:1137.06px;top:572.67px;font-size:20px;line-height:20px;font-weight:normal;color:#030f78;transform:scaleX(0.9367)">-0.04</div>
<div class="t" style="left:1279.56px;top:572.67px;font-size:20px;line-height:20px;font-weight:normal;color:#030f78;transform:scaleX(0.9367)">0.34</div>
<div class="t" style="left:1421.36px;top:572.67px;font-size:20px;line-height:20px;font-weight:normal;color:#030f78;transform:scaleX(0.9367)">0.75</div>
<div class="t" style="left:1563.55px;top:572.67px;font-size:20px;line-height:20px;font-weight:normal;color:#030f78;transform:scaleX(1.0480)">sitting</div>
<div style="position:absolute;left:459.8px;top:600.8px;width:1190.2px;height:25.600000000000023px;background:#f5f5f5;border-radius:3px"></div>
<div class="t" style="left:469.60px;top:603.07px;font-size:20px;line-height:20px;font-weight:normal;color:#030f78;transform:scaleX(0.9129)">ADXL345</div>
<div class="t" style="left:580.20px;top:603.07px;font-size:20px;line-height:20px;font-weight:normal;color:#030f78;transform:scaleX(0.9655)">fcac854f-33a7-4269-af13-852bc740153e</div>
<div class="t" style="left:968.73px;top:603.07px;font-size:20px;line-height:20px;font-weight:normal;color:#030f78;transform:scaleX(0.9750)">2016/1/4 6:49:33</div>
<div class="t" style="left:1137.06px;top:603.07px;font-size:20px;line-height:20px;font-weight:normal;color:#030f78;transform:scaleX(0.9367)">-0.04</div>
<div class="t" style="left:1279.56px;top:603.07px;font-size:20px;line-height:20px;font-weight:normal;color:#030f78;transform:scaleX(0.9367)">0.34</div>
<div class="t" style="left:1421.36px;top:603.07px;font-size:20px;line-height:20px;font-weight:normal;color:#030f78;transform:scaleX(0.9367)">0.75</div>
<div class="t" style="left:1563.55px;top:603.07px;font-size:20px;line-height:20px;font-weight:normal;color:#030f78;transform:scaleX(1.0480)">sitting</div>
<div style="position:absolute;left:459.8px;top:631.1999999999999px;width:1190.2px;height:25.600000000000023px;background:#efefef;border-radius:3px"></div>
<div class="t" style="left:469.60px;top:633.47px;font-size:20px;line-height:20px;font-weight:normal;color:#030f78;transform:scaleX(0.9129)">ADXL345</div>
<div class="t" style="left:579.22px;top:633.47px;font-size:20px;line-height:20px;font-weight:normal;color:#030f78;transform:scaleX(0.9803)">ed4f6c09-5c5e-42df-b985-c82b6760adbc</div>
<div class="t" style="left:968.73px;top:633.47px;font-size:20px;line-height:20px;font-weight:normal;color:#030f78;transform:scaleX(0.9750)">2016/1/4 6:49:37</div>
<div class="t" style="left:1137.06px;top:633.47px;font-size:20px;line-height:20px;font-weight:normal;color:#030f78;transform:scaleX(0.9367)">-0.04</div>
<div class="t" style="left:1279.56px;top:633.47px;font-size:20px;line-height:20px;font-weight:normal;color:#030f78;transform:scaleX(0.9367)">0.34</div>
<div class="t" style="left:1421.36px;top:633.47px;font-size:20px;line-height:20px;font-weight:normal;color:#030f78;transform:scaleX(0.9367)">0.75</div>
<div class="t" style="left:1563.55px;top:633.47px;font-size:20px;line-height:20px;font-weight:normal;color:#030f78;transform:scaleX(1.0480)">sitting</div>
<div style="position:absolute;left:459.8px;top:661.6px;width:1190.2px;height:25.600000000000023px;background:#f5f5f5;border-radius:3px"></div>
<div class="t" style="left:469.60px;top:663.87px;font-size:20px;line-height:20px;font-weight:normal;color:#030f78;transform:scaleX(0.9129)">ADXL345</div>
<div class="t" style="left:579.23px;top:663.87px;font-size:20px;line-height:20px;font-weight:normal;color:#030f78;transform:scaleX(0.9667)">5cacf544-27f6-4724-8065-2d7e6ea0927c</div>
<div class="t" style="left:968.73px;top:663.87px;font-size:20px;line-height:20px;font-weight:normal;color:#030f78;transform:scaleX(0.9750)">2016/1/4 6:49:39</div>
<div class="t" style="left:1137.06px;top:663.87px;font-size:20px;line-height:20px;font-weight:normal;color:#030f78;transform:scaleX(0.9367)">-0.04</div>
<div class="t" style="left:1279.56px;top:663.87px;font-size:20px;line-height:20px;font-weight:normal;color:#030f78;transform:scaleX(0.9367)">0.33</div>
<div class="t" style="left:1421.36px;top:663.87px;font-size:20px;line-height:20px;font-weight:normal;color:#030f78;transform:scaleX(0.9367)">0.75</div>
<div class="t" style="left:1563.55px;top:663.87px;font-size:20px;line-height:20px;font-weight:normal;color:#030f78;transform:scaleX(1.0480)">sitting</div>
<div style="position:absolute;left:459.8px;top:692.0px;width:1190.2px;height:25.600000000000023px;background:#efefef;border-radius:3px"></div>
<div class="t" style="left:469.60px;top:694.27px;font-size:20px;line-height:20px;font-weight:normal;color:#030f78;transform:scaleX(0.9129)">ADXL345</div>
<div class="t" style="left:579.22px;top:694.27px;font-size:20px;line-height:20px;font-weight:normal;color:#030f78;transform:scaleX(0.9769)">2eb036ce-308f-424b-9b78-6d73bb85a5c1</div>
<div class="t" style="left:968.73px;top:694.27px;font-size:20px;line-height:20px;font-weight:normal;color:#030f78;transform:scaleX(0.9750)">2016/1/4 6:49:43</div>
<div class="t" style="left:1137.06px;top:694.27px;font-size:20px;line-height:20px;font-weight:normal;color:#030f78;transform:scaleX(0.9367)">-0.04</div>
<div class="t" style="left:1279.56px;top:694.27px;font-size:20px;line-height:20px;font-weight:normal;color:#030f78;transform:scaleX(0.9367)">0.33</div>
<div class="t" style="left:1421.36px;top:694.27px;font-size:20px;line-height:20px;font-weight:normal;color:#030f78;transform:scaleX(0.9367)">0.75</div>
<div class="t" style="left:1563.55px;top:694.27px;font-size:20px;line-height:20px;font-weight:normal;color:#030f78;transform:scaleX(1.0480)">sitting</div>
<div style="position:absolute;left:459.8px;top:722.4px;width:1190.2px;height:25.600000000000023px;background:#f5f5f5;border-radius:3px"></div>
<div class="t" style="left:469.60px;top:724.67px;font-size:20px;line-height:20px;font-weight:normal;color:#030f78;transform:scaleX(0.9129)">ADXL345</div>
<div class="t" style="left:579.24px;top:724.67px;font-size:20px;line-height:20px;font-weight:normal;color:#030f78;transform:scaleX(0.9588)">7241c71e-1ea5-4a55-b66a-649c961baaab</div>
<div class="t" style="left:968.73px;top:724.67px;font-size:20px;line-height:20px;font-weight:normal;color:#030f78;transform:scaleX(0.9750)">2016/1/4 6:49:46</div>
<div class="t" style="left:1137.06px;top:724.67px;font-size:20px;line-height:20px;font-weight:normal;color:#030f78;transform:scaleX(0.9367)">-0.04</div>
<div class="t" style="left:1279.56px;top:724.67px;font-size:20px;line-height:20px;font-weight:normal;color:#030f78;transform:scaleX(0.9367)">0.32</div>
<div class="t" style="left:1421.36px;top:724.67px;font-size:20px;line-height:20px;font-weight:normal;color:#030f78;transform:scaleX(0.9367)">0.75</div>
<div class="t" style="left:1563.55px;top:724.67px;font-size:20px;line-height:20px;font-weight:normal;color:#030f78;transform:scaleX(1.0480)">sitting</div>
<div style="position:absolute;left:459.8px;top:752.8px;width:1190.2px;height:25.600000000000023px;background:#efefef;border-radius:3px"></div>
<div class="t" style="left:469.60px;top:755.07px;font-size:20px;line-height:20px;font-weight:normal;color:#030f78;transform:scaleX(0.9129)">ADXL345</div>
<div class="t" style="left:579.23px;top:755.07px;font-size:20px;line-height:20px;font-weight:normal;color:#030f78;transform:scaleX(0.9727)">547a8484-7763-40d6-845f-c211644e66d1</div>
<div class="t" style="left:968.73px;top:755.07px;font-size:20px;line-height:20px;font-weight:normal;color:#030f78;transform:scaleX(0.9750)">2016/1/4 6:49:48</div>
<div class="t" style="left:1137.06px;top:755.07px;font-size:20px;line-height:20px;font-weight:normal;color:#030f78;transform:scaleX(0.9367)">-0.04</div>
<div class="t" style="left:1279.56px;top:755.07px;font-size:20px;line-height:20px;font-weight:normal;color:#030f78;transform:scaleX(0.9367)">0.32</div>
<div class="t" style="left:1421.36px;top:755.07px;font-size:20px;line-height:20px;font-weight:normal;color:#030f78;transform:scaleX(0.9367)">0.75</div>
<div class="t" style="left:1563.55px;top:755.07px;font-size:20px;line-height:20px;font-weight:normal;color:#030f78;transform:scaleX(1.0480)">sitting</div>
<div style="position:absolute;left:459.8px;top:783.2px;width:1190.2px;height:25.600000000000023px;background:#f5f5f5;border-radius:3px"></div>
<div class="t" style="left:469.60px;top:785.47px;font-size:20px;line-height:20px;font-weight:normal;color:#030f78;transform:scaleX(0.9129)">ADXL345</div>
<div class="t" style="left:580.20px;top:785.47px;font-size:20px;line-height:20px;font-weight:normal;color:#030f78;transform:scaleX(0.9659)">f7e47e7a-924d-418f-a600-c51cc998352b</div>
<div class="t" style="left:968.73px;top:785.47px;font-size:20px;line-height:20px;font-weight:normal;color:#030f78;transform:scaleX(0.9750)">2016/1/4 6:49:51</div>
<div class="t" style="left:1137.06px;top:785.47px;font-size:20px;line-height:20px;font-weight:normal;color:#030f78;transform:scaleX(0.9367)">-0.05</div>
<div class="t" style="left:1279.56px;top:785.47px;font-size:20px;line-height:20px;font-weight:normal;color:#030f78;transform:scaleX(0.9367)">0.32</div>
<div class="t" style="left:1421.36px;top:785.47px;font-size:20px;line-height:20px;font-weight:normal;color:#030f78;transform:scaleX(0.9367)">0.75</div>
<div class="t" style="left:1563.55px;top:785.47px;font-size:20px;line-height:20px;font-weight:normal;color:#030f78;transform:scaleX(1.0480)">sitting</div>
<div style="position:absolute;left:459.8px;top:813.6px;width:1190.2px;height:25.600000000000023px;background:#efefef;border-radius:3px"></div>
<div class="t" style="left:469.60px;top:815.87px;font-size:20px;line-height:20px;font-weight:normal;color:#030f78;transform:scaleX(0.9129)">ADXL345</div>
<div class="t" style="left:579.22px;top:815.87px;font-size:20px;line-height:20px;font-weight:normal;color:#030f78;transform:scaleX(0.9832)">171199f4-39b8-42ea-bdd4-d545618b8121</div>
<div class="t" style="left:968.73px;top:815.87px;font-size:20px;line-height:20px;font-weight:normal;color:#030f78;transform:scaleX(0.9685)">2016/1/4 6:49:54</div>
<div class="t" style="left:1137.06px;top:815.87px;font-size:20px;line-height:20px;font-weight:normal;color:#030f78;transform:scaleX(0.9367)">-0.04</div>
<div class="t" style="left:1279.56px;top:815.87px;font-size:20px;line-height:20px;font-weight:normal;color:#030f78;transform:scaleX(0.9367)">0.31</div>
<div class="t" style="left:1421.36px;top:815.87px;font-size:20px;line-height:20px;font-weight:normal;color:#030f78;transform:scaleX(0.9367)">0.75</div>
<div class="t" style="left:1563.55px;top:815.87px;font-size:20px;line-height:20px;font-weight:normal;color:#030f78;transform:scaleX(1.0480)">sitting</div>
<div style="position:absolute;left:458.3px;top:842.5px;width:1191.7px;height:27.600000000000023px;background:linear-gradient(#fbfbfb,#f3f3f3);box-sizing:border-box;border:1px solid #b6e2fb;border-radius:3px"></div>
<div class="t" style="left:469.60px;top:846.27px;font-size:20px;line-height:20px;font-weight:normal;color:#030f78;transform:scaleX(0.9129)">ADXL345</div>
<div class="t" style="left:579.23px;top:846.27px;font-size:20px;line-height:20px;font-weight:normal;color:#030f78;transform:scaleX(0.9664)">1c9939e6-3081-4bfb-956c-e0ac32819a20</div>
<div class="t" style="left:968.73px;top:846.27px;font-size:20px;line-height:20px;font-weight:normal;color:#030f78;transform:scaleX(0.9750)">2016/1/4 6:49:57</div>
<div class="t" style="left:1137.06px;top:846.27px;font-size:20px;line-height:20px;font-weight:normal;color:#030f78;transform:scaleX(0.9367)">-0.05</div>
<div class="t" style="left:1279.56px;top:846.27px;font-size:20px;line-height:20px;font-weight:normal;color:#030f78;transform:scaleX(0.9367)">0.31</div>
<div class="t" style="left:1421.36px;top:846.27px;font-size:20px;line-height:20px;font-weight:normal;color:#030f78;transform:scaleX(0.9367)">0.76</div>
<div class="t" style="left:1563.55px;top:846.27px;font-size:20px;line-height:20px;font-weight:normal;color:#030f78;transform:scaleX(1.0480)">sitting</div>
<div style="position:absolute;left:459.8px;top:874.4px;width:1190.2px;height:25.600000000000023px;background:#efefef;border-radius:3px"></div>
<div class="t" style="left:469.60px;top:876.67px;font-size:20px;line-height:20px;font-weight:normal;color:#030f78;transform:scaleX(0.9129)">ADXL345</div>
<div class="t" style="left:579.21px;top:876.67px;font-size:20px;line-height:20px;font-weight:normal;color:#030f78;transform:scaleX(0.9856)">1b4e893d-d0f4-49d8-b905-cf13cf9be12e</div>
<div class="t" style="left:968.73px;top:876.67px;font-size:20px;line-height:20px;font-weight:normal;color:#030f78;transform:scaleX(0.9685)">2016/1/4 6:50:00</div>
<div class="t" style="left:1137.06px;top:876.67px;font-size:20px;line-height:20px;font-weight:normal;color:#030f78;transform:scaleX(0.9367)">-0.05</div>
<div class="t" style="left:1279.56px;top:876.67px;font-size:20px;line-height:20px;font-weight:normal;color:#030f78;transform:scaleX(0.9367)">0.31</div>
<div class="t" style="left:1421.36px;top:876.67px;font-size:20px;line-height:20px;font-weight:normal;color:#030f78;transform:scaleX(0.9367)">0.75</div>
<div class="t" style="left:1563.55px;top:876.67px;font-size:20px;line-height:20px;font-weight:normal;color:#030f78;transform:scaleX(1.0480)">sitting</div>
<div style="position:absolute;left:459.8px;top:904.8px;width:1190.2px;height:25.600000000000023px;background:#f5f5f5;border-radius:3px"></div>
<div class="t" style="left:469.60px;top:907.07px;font-size:20px;line-height:20px;font-weight:normal;color:#030f78;transform:scaleX(0.9129)">ADXL345</div>
<div class="t" style="left:579.23px;top:907.07px;font-size:20px;line-height:20px;font-weight:normal;color:#030f78;transform:scaleX(0.9734)">22cbb200-3e2d-49a4-8743-23c5def618cd</div>
<div class="t" style="left:968.73px;top:907.07px;font-size:20px;line-height:20px;font-weight:normal;color:#030f78;transform:scaleX(0.9750)">2016/1/4 6:50:03</div>
<div class="t" style="left:1137.06px;top:907.07px;font-size:20px;line-height:20px;font-weight:normal;color:#030f78;transform:scaleX(0.9367)">-0.05</div>
<div class="t" style="left:1279.56px;top:907.07px;font-size:20px;line-height:20px;font-weight:normal;color:#030f78;transform:scaleX(0.9367)">0.3</div>
<div class="t" style="left:1421.36px;top:907.07px;font-size:20px;line-height:20px;font-weight:normal;color:#030f78;transform:scaleX(0.9367)">0.75</div>
<div class="t" style="left:1563.55px;top:907.07px;font-size:20px;line-height:20px;font-weight:normal;color:#030f78;transform:scaleX(1.0480)">sitting</div>
</body></html>
